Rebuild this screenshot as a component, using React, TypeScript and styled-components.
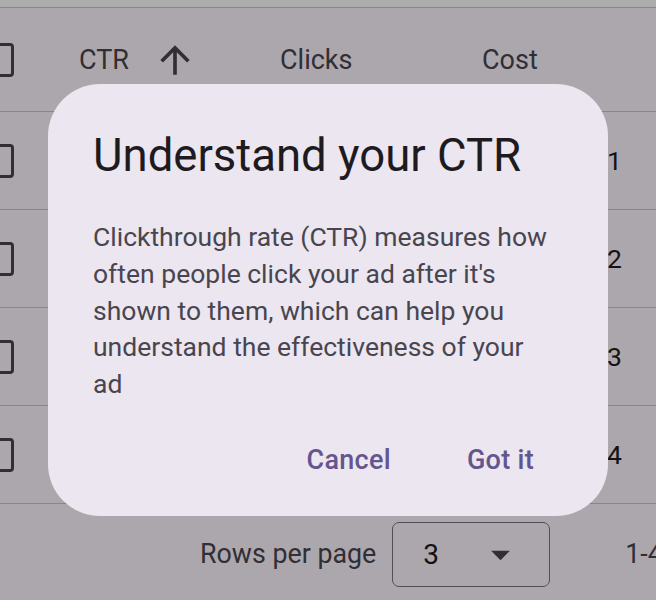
import { FC } from 'react';
import styled, { createGlobalStyle } from 'styled-components';

const GlobalStyle = createGlobalStyle`
    html, body {
        margin: 0;
        padding: 0;
        background: #ffffff;
        overflow: hidden;
        font-family: Roboto, "Liberation Sans", sans-serif;
    }
`;

const Page = styled.div`
    width: 656px;
    height: 600px;
    overflow: hidden;
    padding-top: 7px;
    box-sizing: border-box;
`;

const Table = styled.div`
    width: 763px;
    margin-left: -36px;
    background: #fef7ff;
    border-top: 1px solid #cac4d0;
`;

const Row = styled.div<{ $header?: boolean }>`
    display: grid;
    grid-template-columns: 115px 201px 202px 125px 1fr;
    align-items: center;
    height: ${p => (p.$header ? '103px' : '97px')};
    border-bottom: 1px solid #cac4d0;
`;

const CheckCell = styled.div`
    padding-left: 16px;
    display: flex;
    align-items: center;
`;

const Checkbox = styled.span`
    width: 34px;
    height: 34px;
    box-sizing: border-box;
    border: 3.6px solid #49454f;
    border-radius: 4px;
`;

const HeadCell = styled.div`
    display: flex;
    align-items: center;
    gap: 24px;
    font-size: 27px;
    color: #49454f;
`;

const Cell = styled.div`
    font-size: 26.5px;
    color: #1d1b20;
`;

const Footer = styled.div`
    display: flex;
    align-items: center;
    height: 100px;
    padding-left: 236px;
    font-size: 26.8px;
    color: #49454f;
`;

const RowsLabel = styled.span`
    margin-right: 16px;
`;

const Select = styled.div`
    width: 158px;
    height: 65px;
    box-sizing: border-box;
    border: 1.8px solid #79747e;
    border-radius: 7px;
    display: flex;
    align-items: center;
    justify-content: space-between;
    padding: 0 26px 0 30px;
    font-size: 28px;
    color: #1d1b20;
`;

const Range = styled.span`
    margin-left: 75px;
    white-space: nowrap;
`;

const Scrim = styled.div`
    position: fixed;
    inset: 0;
    background: rgba(0, 0, 0, 0.32);
    display: flex;
    align-items: center;
    justify-content: center;
`;

const Dialog = styled.div`
    width: 560px;
    height: 432px;
    box-sizing: border-box;
    background: #ece6f0;
    border-radius: 52px;
    padding: 43px 43px 20px 45px;
    display: flex;
    flex-direction: column;
`;

const Title = styled.h2`
    margin: 0 0 34px;
    font-size: 45.5px;
    line-height: 58px;
    font-weight: 400;
    color: #1d1b20;
`;

const Body = styled.p`
    margin: 0;
    max-width: 458px;
    font-size: 26.5px;
    line-height: 36.75px;
    color: #49454f;
`;

const Actions = styled.div`
    margin-top: auto;
    height: 72px;
    display: flex;
    justify-content: flex-end;
    align-items: center;
    gap: 34px;
    padding-right: 10px;
`;

const TextButton = styled.button`
    height: 72px;
    padding: 0 21px;
    border: none;
    background: transparent;
    font-family: Roboto, "Liberation Sans", sans-serif;
    font-size: 27px;
    font-weight: 500;
    letter-spacing: 0.3px;
    color: #65558f;
    cursor: pointer;
`;

const ArrowUp: FC = () => (
    <svg width="44" height="44" viewBox="0 0 24 24" fill="#49454f">
        <path d="M4 12l1.41 1.41L11 7.83V20h2V7.83l5.58 5.59L20 12l-8-8-8 8z" />
    </svg>
);

const DropDown: FC = () => (
    <svg width="45" height="45" viewBox="0 0 24 24" fill="#49454f">
        <path d="M7 10l5 5 5-5z" />
    </svg>
);

// only the last column peeks out from behind the dialog
const rows = ['1', '2', '3', '4'];

const App: FC = () => {
    return (
        <Page>
            <GlobalStyle />
            <Table>
                <Row $header>
                    <CheckCell><Checkbox /></CheckCell>
                    <HeadCell>CTR <ArrowUp /></HeadCell>
                    <HeadCell>Clicks</HeadCell>
                    <HeadCell>Cost</HeadCell>
                    <HeadCell />
                </Row>
                {rows.map(n => (
                    <Row key={n}>
                        <CheckCell><Checkbox /></CheckCell>
                        <Cell />
                        <Cell />
                        <Cell />
                        <Cell>{n}</Cell>
                    </Row>
                ))}
                <Footer>
                    <RowsLabel>Rows per page</RowsLabel>
                    <Select>
                        3
                        <DropDown />
                    </Select>
                    <Range>1-4 of 4</Range>
                </Footer>
            </Table>
            <Scrim>
                <Dialog role="dialog">
                    <Title>Understand your CTR</Title>
                    <Body>
                        Clickthrough rate (CTR) measures how often people click your ad after it's shown to
                        them, which can help you understand the effectiveness of your ad
                    </Body>
                    <Actions>
                        <TextButton>Cancel</TextButton>
                        <TextButton>Got it</TextButton>
                    </Actions>
                </Dialog>
            </Scrim>
        </Page>
    );
};

export default App;
